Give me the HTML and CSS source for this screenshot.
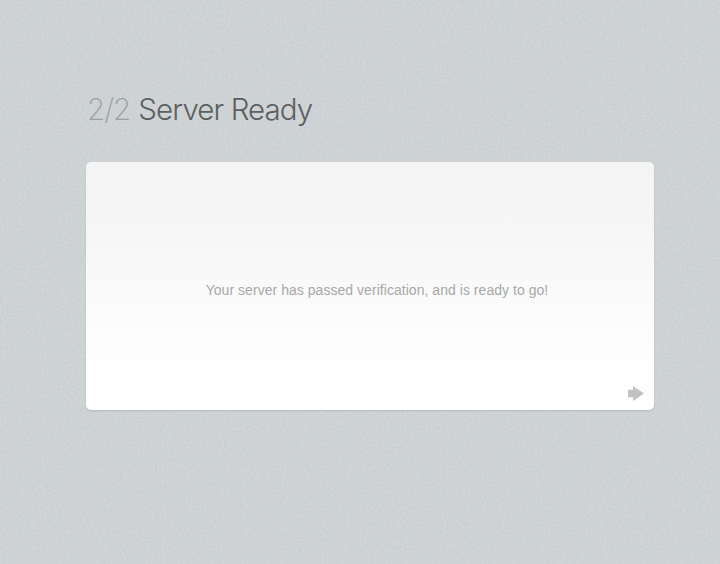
FILE: index.html
```html
<!DOCTYPE html>
<html lang="en">
<head>
<meta charset="utf-8">
<title>Server Ready</title>
<link rel="stylesheet" href="styles.css">
</head>
<body>
<svg class="texture" aria-hidden="true">
  <filter id="grain" x="0" y="0" width="100%" height="100%" color-interpolation-filters="sRGB">
    <feTurbulence type="fractalNoise" baseFrequency="0.45" numOctaves="2" seed="4" stitchTiles="stitch"/>
    <feColorMatrix type="matrix" values="0.055 0 0 0 0.779  0.055 0 0 0 0.797  0.055 0 0 0 0.805  0 0 0 0 1"/>
  </filter>
  <rect width="100%" height="100%" filter="url(#grain)"/>
</svg>
<main class="setup">
  <h1 class="title"><span class="step">2/2</span><span class="name">Server Ready</span></h1>
  <section class="card">
    <p class="message">Your server has passed verification, and is ready to go!</p>
    <a class="next" aria-label="Continue">
      <svg class="arrow" viewBox="0 0 16 15"><path d="M0 3.8h5V0l11 7.5L5 15v-3.8H0z"/></svg>
    </a>
  </section>
</main>
</body>
</html>
```
FILE: styles.css
```css
body {
  margin: 0;
  height: 564px;
  overflow: hidden;
  background: #cdd2d4;
  font-family: "Liberation Sans", Arial, sans-serif;
}

.texture {
  position: absolute;
  inset: 0;
  z-index: -1;
  width: 100%;
  height: 100%;
}

.setup {
  width: 568px;
  margin-left: 86px;
  padding-top: 89px;
}

.title {
  display: flex;
  gap: 8px;
  height: 40px;
  margin: 0 0 33px 1px;
  font: 300 29.5px/40px Inter, sans-serif;
  letter-spacing: -0.9px;
  color: #5c5f5f;
}

.step {
  font-weight: 200;
  color: #9b9fa1;
  letter-spacing: -1px;
}

.card {
  display: grid;
  grid-template-rows: 1fr;
  box-sizing: border-box;
  height: 248px;
  border-radius: 5px;
  background: linear-gradient(#f4f4f4 0%, #f5f5f5 18%, #fefefe 80%, #fff 100%);
  box-shadow: 0 1px 2px rgba(0, 0, 0, 0.13);
}

.message {
  grid-area: 1 / 1;
  place-self: center;
  margin: 0;
  padding: 8px 0 0 14px;
  font-size: 14px;
  line-height: 16px;
  letter-spacing: 0.04px;
  white-space: nowrap;
  color: #a8a8a8;
}

.next {
  grid-area: 1 / 1;
  place-self: end;
  margin: 0 10px 9px 0;
}

.arrow {
  display: block;
  width: 16px;
  height: 15px;
  fill: #c1c1c1;
}
```
